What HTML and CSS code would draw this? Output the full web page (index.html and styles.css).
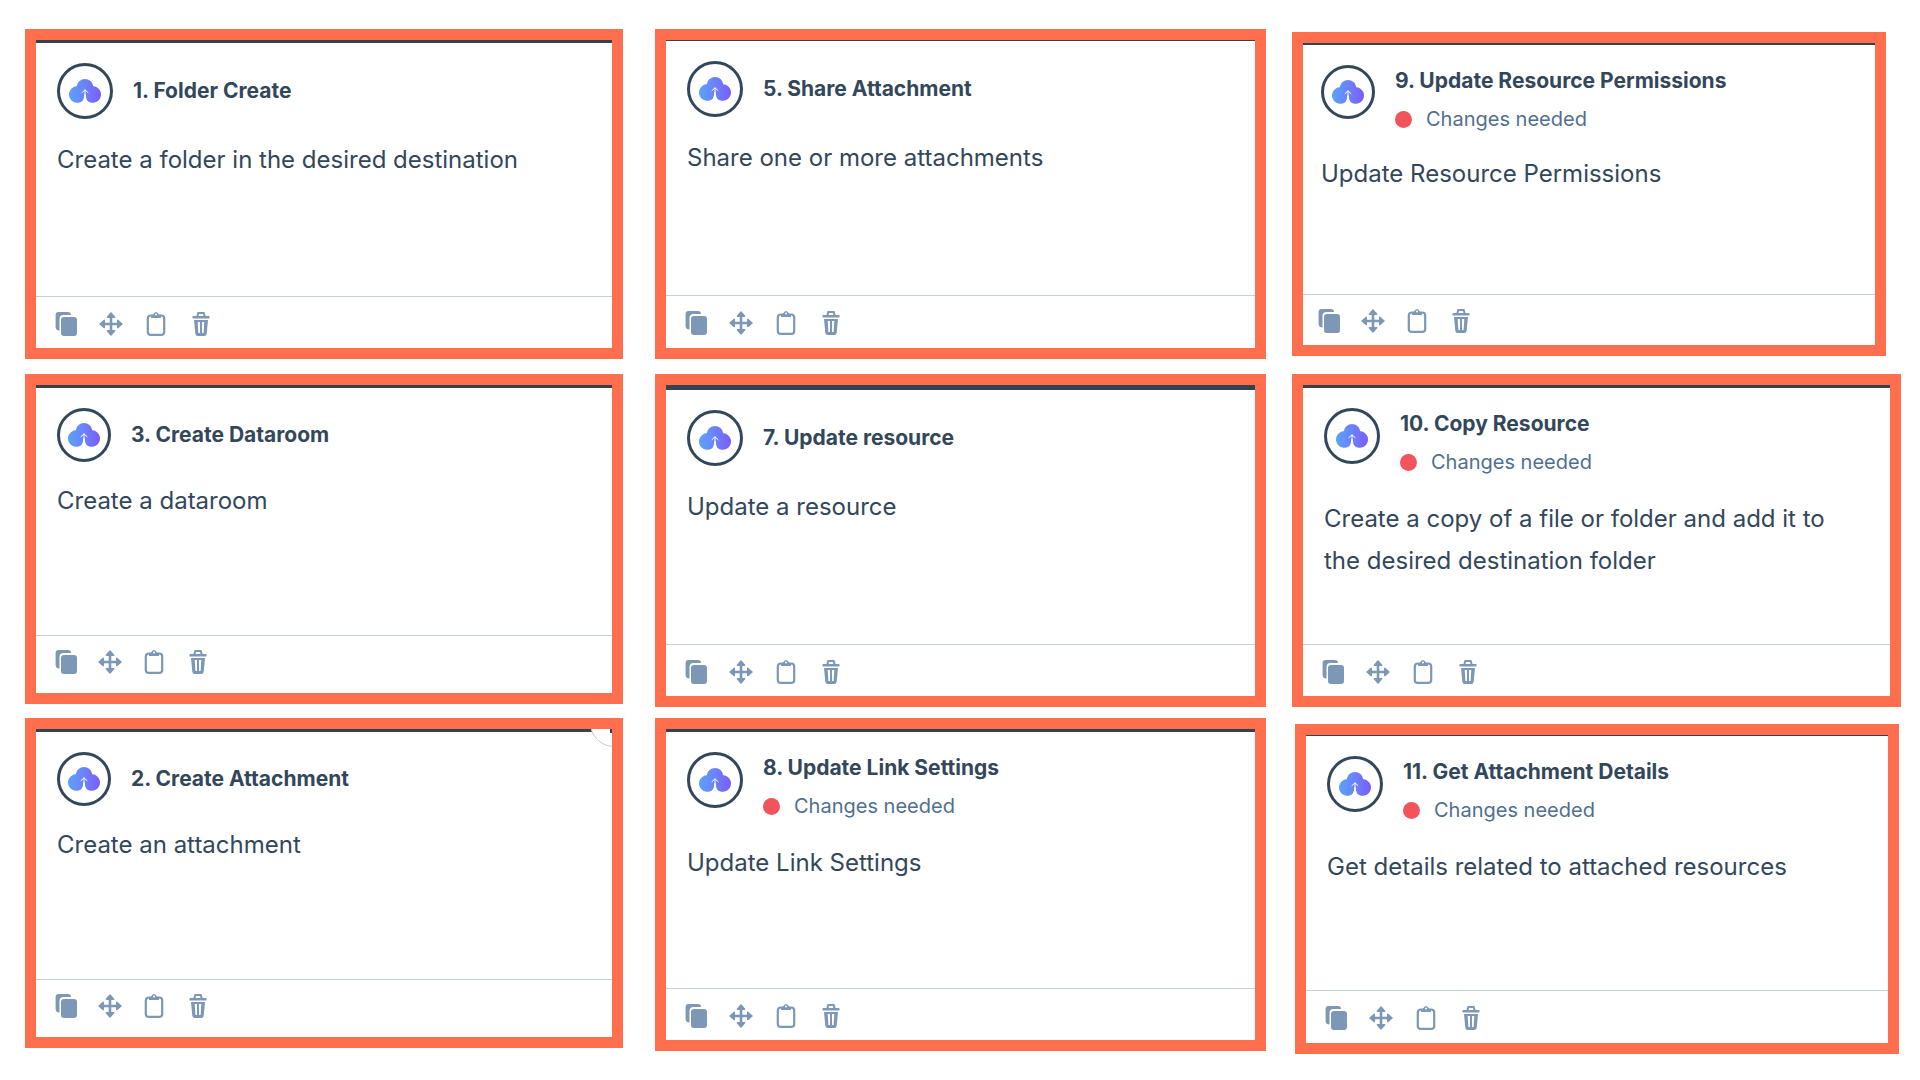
FILE: index.html
```html
<!DOCTYPE html>
<html lang="en">
<head>
    <meta charset="utf-8">
    <title>Workflow Actions</title>
    <link rel="stylesheet" href="styles.css">
</head>
<body>
    <!-- shared icons -->
    <svg class="sprite" aria-hidden="true">
        <defs>
            <linearGradient id="cloudFill" x1="0" y1="0" x2="1" y2="0">
                <stop offset="0" stop-color="#5ca2fd"/>
                <stop offset="0.5" stop-color="#6b82fb"/>
                <stop offset="1" stop-color="#7c5cfa"/>
            </linearGradient>
        </defs>
        <symbol id="cloud" viewBox="0 0 34 24">
            <path fill="url(#cloudFill)" d="M17 0a8.500 8.500 0 0 1 8.300 7.200A8.300 8.300 0 1 1 19 21.500Q17.500 19.500 17.500 16h-1Q16.500 19.500 15 21.500A8.300 8.300 0 1 1 8.700 7.200A8.500 8.500 0 0 1 17 0z"/>
            <path fill="none" stroke="#fff" stroke-width="1" stroke-linecap="round" d="M17 11v8M14 13.600 17 10.800l3 2.800"/>
            <path fill="#fff" d="M16.500 15h1q.2 5 2.800 9h-6.600q2.600-4 2.800-9z"/>
        </symbol>
        <symbol id="copy" viewBox="0 0 24 24">
            <path d="M4.500 0h9.500a3 3 0 0 1 3 3H9.500A4 4 0 0 0 5.500 7v11.500A3.800 3.800 0 0 1 1.600 15V3A3 3 0 0 1 4.500 0z"/>
            <rect x="7" y="5" width="16" height="19" rx="3"/>
        </symbol>
        <symbol id="move" viewBox="0 0 24 24">
            <path d="M10.700 5v5.700H5v2.600h5.700V19h2.600v-5.700H19v-2.600h-5.700V5z"/>
            <path stroke="currentColor" stroke-width="1.500" stroke-linejoin="round" d="M12 1l3.600 4.300H8.400zM12 23l3.600-4.300H8.400zM1 12l4.300-3.600v7.200zM23 12l-4.300-3.600v7.200z"/>
        </symbol>
        <symbol id="paste" viewBox="0 0 24 24">
            <rect x="3.800" y="3.500" width="16.400" height="19.400" rx="3" fill="none" stroke="currentColor" stroke-width="2.200"/>
            <path d="M7 6V4.500Q7 3 9 2.800 10.200 0 12 0t3 2.800q2 .2 2 1.700V6z"/>
            <circle cx="12" cy="2.600" r="1" fill="#fff"/>
        </symbol>
        <symbol id="trash" viewBox="0 0 24 24">
            <path fill="none" stroke="currentColor" stroke-width="2" d="M8.300 4.500 9.300 1h5.400l1 3.500"/>
            <rect x="3.400" y="4" width="17.200" height="2.600" rx="1"/>
            <path fill-rule="evenodd" d="M5 8h14l-1.300 13.800a2.500 2.500 0 0 1-2.500 2.200H8.800a2.500 2.500 0 0 1-2.500-2.200zM8.700 10l.7 11h1.600V10zM13 10v11h1.600l.7-11z"/>
        </symbol>
    </svg>

    <main class="board">
        <section class="card first-col">
            <div class="card-body">
                <div class="card-head">
                    <span class="app-icon"><svg><use href="#cloud"/></svg></span>
                    <h2>1. Folder Create</h2>
                </div>
                <p class="desc">Create a folder in the desired destination</p>
            </div>
            <div class="card-actions">
                <button type="button" aria-label="Copy"><svg><use href="#copy"/></svg></button>
                <button type="button" aria-label="Move"><svg><use href="#move"/></svg></button>
                <button type="button" aria-label="Paste"><svg><use href="#paste"/></svg></button>
                <button type="button" aria-label="Delete"><svg><use href="#trash"/></svg></button>
            </div>
        </section>

        <section class="card thin-line">
            <div class="card-body">
                <div class="card-head">
                    <span class="app-icon"><svg><use href="#cloud"/></svg></span>
                    <h2>5. Share Attachment</h2>
                </div>
                <p class="desc">Share one or more attachments</p>
            </div>
            <div class="card-actions">
                <button type="button" aria-label="Copy"><svg><use href="#copy"/></svg></button>
                <button type="button" aria-label="Move"><svg><use href="#move"/></svg></button>
                <button type="button" aria-label="Paste"><svg><use href="#paste"/></svg></button>
                <button type="button" aria-label="Delete"><svg><use href="#trash"/></svg></button>
            </div>
        </section>

        <section class="card compact short">
            <div class="card-body">
                <div class="card-head">
                    <span class="app-icon"><svg><use href="#cloud"/></svg></span>
                    <div>
                        <h2>9. Update Resource Permissions</h2>
                        <p class="status">Changes needed</p>
                    </div>
                </div>
                <p class="desc">Update Resource Permissions</p>
            </div>
            <div class="card-actions">
                <button type="button" aria-label="Copy"><svg><use href="#copy"/></svg></button>
                <button type="button" aria-label="Move"><svg><use href="#move"/></svg></button>
                <button type="button" aria-label="Paste"><svg><use href="#paste"/></svg></button>
                <button type="button" aria-label="Delete"><svg><use href="#trash"/></svg></button>
            </div>
        </section>

        <section class="card first-col compact roomy">
            <div class="card-body">
                <div class="card-head">
                    <span class="app-icon"><svg><use href="#cloud"/></svg></span>
                    <h2>3. Create Dataroom</h2>
                </div>
                <p class="desc">Create a dataroom</p>
            </div>
            <div class="card-actions">
                <button type="button" aria-label="Copy"><svg><use href="#copy"/></svg></button>
                <button type="button" aria-label="Move"><svg><use href="#move"/></svg></button>
                <button type="button" aria-label="Paste"><svg><use href="#paste"/></svg></button>
                <button type="button" aria-label="Delete"><svg><use href="#trash"/></svg></button>
            </div>
        </section>

        <section class="card tall thick-line">
            <div class="card-body">
                <div class="card-head">
                    <span class="app-icon"><svg><use href="#cloud"/></svg></span>
                    <h2>7. Update resource</h2>
                </div>
                <p class="desc">Update a resource</p>
            </div>
            <div class="card-actions">
                <button type="button" aria-label="Copy"><svg><use href="#copy"/></svg></button>
                <button type="button" aria-label="Move"><svg><use href="#move"/></svg></button>
                <button type="button" aria-label="Paste"><svg><use href="#paste"/></svg></button>
                <button type="button" aria-label="Delete"><svg><use href="#trash"/></svg></button>
            </div>
        </section>

        <section class="card tall">
            <div class="card-body">
                <div class="card-head">
                    <span class="app-icon"><svg><use href="#cloud"/></svg></span>
                    <div>
                        <h2>10. Copy Resource</h2>
                        <p class="status">Changes needed</p>
                    </div>
                </div>
                <p class="desc">Create a copy of a file or folder and add it to the desired destination folder</p>
            </div>
            <div class="card-actions">
                <button type="button" aria-label="Copy"><svg><use href="#copy"/></svg></button>
                <button type="button" aria-label="Move"><svg><use href="#move"/></svg></button>
                <button type="button" aria-label="Paste"><svg><use href="#paste"/></svg></button>
                <button type="button" aria-label="Delete"><svg><use href="#trash"/></svg></button>
            </div>
        </section>

        <section class="card first-col compact roomy">
            <span class="corner"></span>
            <div class="card-body">
                <div class="card-head">
                    <span class="app-icon"><svg><use href="#cloud"/></svg></span>
                    <h2>2. Create Attachment</h2>
                </div>
                <p class="desc">Create an attachment</p>
            </div>
            <div class="card-actions">
                <button type="button" aria-label="Copy"><svg><use href="#copy"/></svg></button>
                <button type="button" aria-label="Move"><svg><use href="#move"/></svg></button>
                <button type="button" aria-label="Paste"><svg><use href="#paste"/></svg></button>
                <button type="button" aria-label="Delete"><svg><use href="#trash"/></svg></button>
            </div>
        </section>

        <section class="card tall">
            <div class="card-body">
                <div class="card-head">
                    <span class="app-icon"><svg><use href="#cloud"/></svg></span>
                    <div>
                        <h2>8. Update Link Settings</h2>
                        <p class="status">Changes needed</p>
                    </div>
                </div>
                <p class="desc">Update Link Settings</p>
            </div>
            <div class="card-actions">
                <button type="button" aria-label="Copy"><svg><use href="#copy"/></svg></button>
                <button type="button" aria-label="Move"><svg><use href="#move"/></svg></button>
                <button type="button" aria-label="Paste"><svg><use href="#paste"/></svg></button>
                <button type="button" aria-label="Delete"><svg><use href="#trash"/></svg></button>
            </div>
        </section>

        <section class="card last thin-line">
            <div class="card-body">
                <div class="card-head">
                    <span class="app-icon"><svg><use href="#cloud"/></svg></span>
                    <div>
                        <h2>11. Get Attachment Details</h2>
                        <p class="status">Changes needed</p>
                    </div>
                </div>
                <p class="desc">Get details related to attached resources</p>
            </div>
            <div class="card-actions">
                <button type="button" aria-label="Copy"><svg><use href="#copy"/></svg></button>
                <button type="button" aria-label="Move"><svg><use href="#move"/></svg></button>
                <button type="button" aria-label="Paste"><svg><use href="#paste"/></svg></button>
                <button type="button" aria-label="Delete"><svg><use href="#trash"/></svg></button>
            </div>
        </section>
    </main>
</body>
</html>
```
FILE: styles.css
```css
* {
    box-sizing: border-box;
}
body {
    margin: 0;
    background: #fff;
    color: #33475b;
    font-family: Inter, "Open Sans", sans-serif;
}
h2, p {
    margin: 0;
}
.sprite {
    position: absolute;
    width: 0;
    height: 0;
}
.board {
    display: grid;
    grid-template-columns: 604fr 611fr 609fr;
    grid-template-rows: minmax(334px, auto);
    grid-auto-rows: minmax(333px, auto);
    align-items: start;
    gap: 11px 26px;
    padding: 29px 19px 24px 25px;
}

/* cards */
.card {
    position: relative;
    display: flex;
    flex-direction: column;
    min-height: 330px;
    border: 11px solid #ff6f4e;
    overflow: hidden;
}
.card.tall {
    min-height: 333px;
}
.card.short {
    min-height: 324px;
    margin: 3px 15px 0 0;
}
.card.first-col {
    margin-right: 6px;
}
.card.last {
    margin: 6px 2px 0 3px;
}
.card-body {
    flex: 1;
    padding: 20px 36px 16px 21px;
    border-top: 3px solid #33424f;
}
.thin-line .card-body {
    border-top-width: 1px;
}
.thick-line .card-body {
    border-top-width: 5px;
}
.card-head {
    display: flex;
    gap: 20px;
    min-height: 56px;
    margin-bottom: 20px;
}
.app-icon {
    display: flex;
    flex: none;
    align-items: center;
    justify-content: center;
    width: 56px;
    height: 56px;
    border: 3px solid #33475b;
    border-radius: 50%;
}
.app-icon svg {
    width: 34px;
    height: 24px;
}
h2 {
    font-size: 21px;
    font-weight: 700;
    line-height: 32px;
}
.card-head > h2 {
    align-self: center;
}
.status {
    display: flex;
    align-items: center;
    gap: 14px;
    margin-top: 6px;
    color: #516f90;
    font-size: 20px;
    line-height: 32px;
}
.status::before {
    content: "";
    width: 17px;
    height: 17px;
    border-radius: 50%;
    background: #f2545b;
}
.desc {
    font-size: 24px;
    line-height: 42px;
}

/* slightly smaller header */
.compact .card-head {
    min-height: 54px;
    margin-bottom: 18px;
}
.compact .app-icon {
    width: 54px;
    height: 54px;
}
.short .card-body {
    padding-left: 18px;
    border-top-width: 2px;
}

/* bottom toolbar */
.card-actions {
    display: flex;
    gap: 21px;
    padding: 15px 18px 12px;
    border-top: 1px solid #c3d0dc;
}
.thin-line .card-actions {
    padding-bottom: 13px;
}
.compact .card-actions {
    gap: 20px;
    padding-top: 14px;
}
.roomy .card-actions {
    padding-bottom: 19px;
}
.short .card-actions {
    padding-left: 14px;
}
.card-actions button {
    width: 24px;
    height: 24px;
    padding: 0;
    border: none;
    background: none;
    color: #7c98b6;
    cursor: pointer;
}
.card-actions svg {
    display: block;
    width: 24px;
    height: 24px;
    fill: currentColor;
}

/* round button cut off by the card corner */
.corner {
    position: absolute;
    top: -30px;
    right: -26px;
    width: 48px;
    height: 48px;
    border: 1px solid #c3ccd4;
    border-radius: 50%;
    background: #fff;
}
.corner::after {
    content: "";
    position: absolute;
    right: 25px;
    bottom: 13px;
    width: 2px;
    height: 4px;
    background: #33424f;
}
```
